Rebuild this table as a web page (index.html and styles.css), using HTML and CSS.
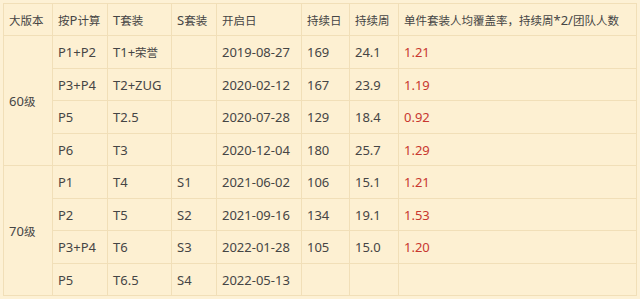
FILE: index.html
```html
<!DOCTYPE html>
<html lang="zh">
<head>
<meta charset="utf-8">
<link rel="stylesheet" href="styles.css">
</head>
<body>
<table class="grid">
  <colgroup>
    <col class="c1"><col class="c2"><col class="c3"><col class="c4"><col class="c5"><col class="c6"><col class="c7"><col class="c8">
  </colgroup>
  <tr class="r-a">
    <td><span class="zh">大版本</span></td>
    <td><span class="zh">按</span>P<span class="zh">计算</span></td>
    <td>T<span class="zh">套装</span></td>
    <td>S<span class="zh">套装</span></td>
    <td><span class="zh">开启日</span></td>
    <td><span class="zh">持续日</span></td>
    <td><span class="zh">持续周</span></td>
    <td><span class="zh">单件套装人均覆盖率，持续周</span>*2/<span class="zh">团队人数</span></td>
  </tr>
  <tr class="r-b">
    <td rowspan="4">60<span class="zh">级</span></td>
    <td>P1+P2</td><td>T1+<span class="zh">荣誉</span></td><td></td><td>2019-08-27</td><td>169</td><td>24.1</td><td class="red">1.21</td>
  </tr>
  <tr class="r-a">
    <td>P3+P4</td><td>T2+ZUG</td><td></td><td>2020-02-12</td><td>167</td><td>23.9</td><td class="red">1.19</td>
  </tr>
  <tr class="r-b">
    <td>P5</td><td>T2.5</td><td></td><td>2020-07-28</td><td>129</td><td>18.4</td><td class="red">0.92</td>
  </tr>
  <tr class="r-a">
    <td>P6</td><td>T3</td><td></td><td>2020-12-04</td><td>180</td><td>25.7</td><td class="red">1.29</td>
  </tr>
  <tr class="r-b">
    <td rowspan="4">70<span class="zh">级</span></td>
    <td>P1</td><td>T4</td><td>S1</td><td>2021-06-02</td><td>106</td><td>15.1</td><td class="red">1.21</td>
  </tr>
  <tr class="r-a">
    <td>P2</td><td>T5</td><td>S2</td><td>2021-09-16</td><td>134</td><td>19.1</td><td class="red">1.53</td>
  </tr>
  <tr class="r-b">
    <td>P3+P4</td><td>T6</td><td>S3</td><td>2022-01-28</td><td>105</td><td>15.0</td><td class="red">1.20</td>
  </tr>
  <tr class="r-a">
    <td>P5</td><td>T6.5</td><td>S4</td><td>2022-05-13</td><td></td><td></td><td></td>
  </tr>
</table>
</body>
</html>
```

FILE: styles.css
```css
html, body {
  margin: 0;
  padding: 0;
  background: #fdf1d5;
}

.grid {
  margin: 3px 0 0 3px;
  border-collapse: collapse;
  table-layout: fixed;
  width: 633px;
  background: #fdf0d2;
  font-family: "Noto Sans", "Noto Sans CJK SC", sans-serif;
  font-size: 13px;
  color: #454545;
}

.c1 { width: 49px; }
.c2 { width: 55px; }
.c3 { width: 64px; }
.c4 { width: 45px; }
.c5 { width: 85px; }
.c6 { width: 48px; }
.c7 { width: 49px; }
.c8 { width: 238px; }

.grid td {
  border: 1px solid #f1dfb8;
  padding: 0 0 0 5px;
  vertical-align: middle;
  white-space: nowrap;
  line-height: 16px;
}

.r-a { height: 32px; }
.r-b { height: 33px; }

.zh {
  font-family: "Noto Sans CJK SC", sans-serif;
  font-size: 11.5px;
}

.red {
  color: #c8372f;
}
```
